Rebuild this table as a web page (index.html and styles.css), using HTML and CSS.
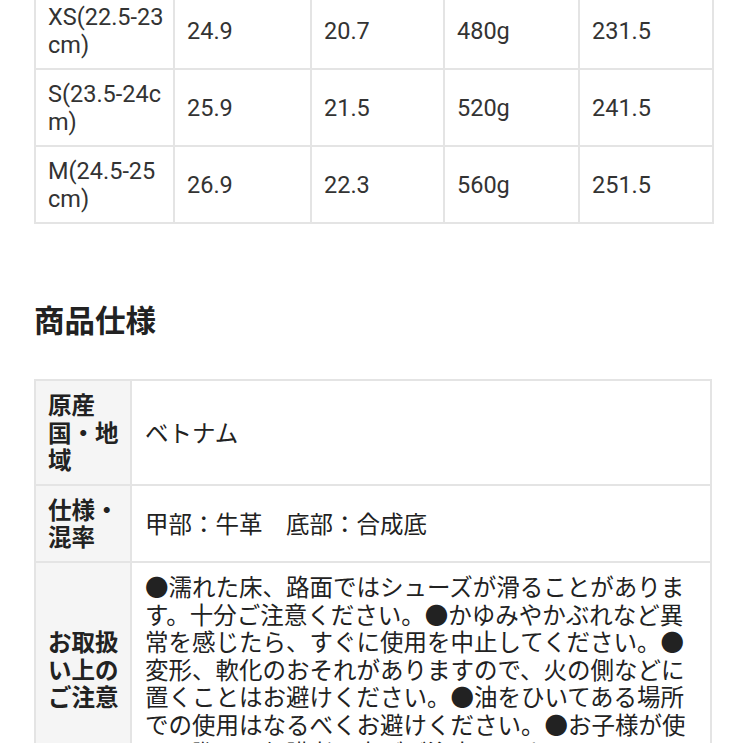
FILE: index.html
```html
<!DOCTYPE html>
<html lang="ja">
<head>
<meta charset="utf-8">
<title>商品仕様</title>
<link rel="stylesheet" href="styles.css">
</head>
<body>
<div class="page">
  <table class="size-table">
    <colgroup>
      <col class="c1"><col class="c2"><col class="c3"><col class="c4"><col class="c5">
    </colgroup>
    <tbody>
      <tr><td>XS(22.5-23 cm)</td><td>24.9</td><td>20.7</td><td>480g</td><td>231.5</td></tr>
      <tr><td>S(23.5-24cm)</td><td>25.9</td><td>21.5</td><td>520g</td><td>241.5</td></tr>
      <tr><td>M(24.5-25 cm)</td><td>26.9</td><td>22.3</td><td>560g</td><td>251.5</td></tr>
    </tbody>
  </table>

  <h2 class="section-title">商品仕様</h2>

  <table class="spec-table">
    <colgroup><col class="label-col"><col></colgroup>
    <tbody>
      <tr><th>原産国・地域</th><td>ベトナム</td></tr>
      <tr><th>仕様・混率</th><td>甲部：牛革　底部：合成底</td></tr>
      <tr><th>お取扱い上のご注意</th><td>●濡れた床、路面ではシューズが滑ることがあります。十分ご注意ください。●かゆみやかぶれなど異常を感じたら、すぐに使用を中止してください。●変形、軟化のおそれがありますので、火の側などに置くことはお避けください。●油をひいてある場所での使用はなるべくお避けください。●お子様が使用の際は、保護者の方がご注意ください。</td></tr>
    </tbody>
  </table>
</div>
</body>
</html>
```
FILE: styles.css
```css
html, body {
  margin: 0;
  padding: 0;
  background: #ffffff;
}
body {
  font-family: Roboto, "Noto Sans CJK JP", sans-serif;
  color: #333333;
  overflow: hidden;
}
.page {
  padding: 0 31px 0 34px;
}
.size-table {
  width: 678px;
  border-collapse: collapse;
  table-layout: fixed;
  margin-top: -9px;
}
.size-table .c1 { width: 139px; }
.size-table .c2 { width: 137px; }
.size-table .c3 { width: 133px; }
.size-table .c4 { width: 135px; }
.size-table .c5 { width: 134px; }
.size-table td {
  border: 2px solid #e4e4e4;
  padding: 9.5px 8px 9.5px 12px;
  font-size: 23.5px;
  line-height: 28px;
  vertical-align: middle;
  word-break: break-all;
  color: #333333;
}
.section-title {
  margin: 75px 0 40px;
  font-size: 30.5px;
  line-height: 40px;
  font-weight: 700;
  color: #222222;
  font-family: "Noto Sans CJK JP", sans-serif;
}
.spec-table {
  width: 678px;
  border-collapse: collapse;
  table-layout: fixed;
  font-family: "Noto Sans CJK JP", sans-serif;
  color: #222222;
}
.spec-table .label-col { width: 96px; }
.spec-table th,
.spec-table td {
  border: 2px solid #e4e4e4;
  font-size: 23.5px;
  line-height: 27.6px;
  vertical-align: middle;
  text-align: left;
}
.spec-table th {
  background: #f5f5f5;
  font-weight: 700;
  padding: 10px 8px 10px 12px;
}
.spec-table td {
  font-weight: 400;
  padding: 10px 12px 10px 13px;
}
```
